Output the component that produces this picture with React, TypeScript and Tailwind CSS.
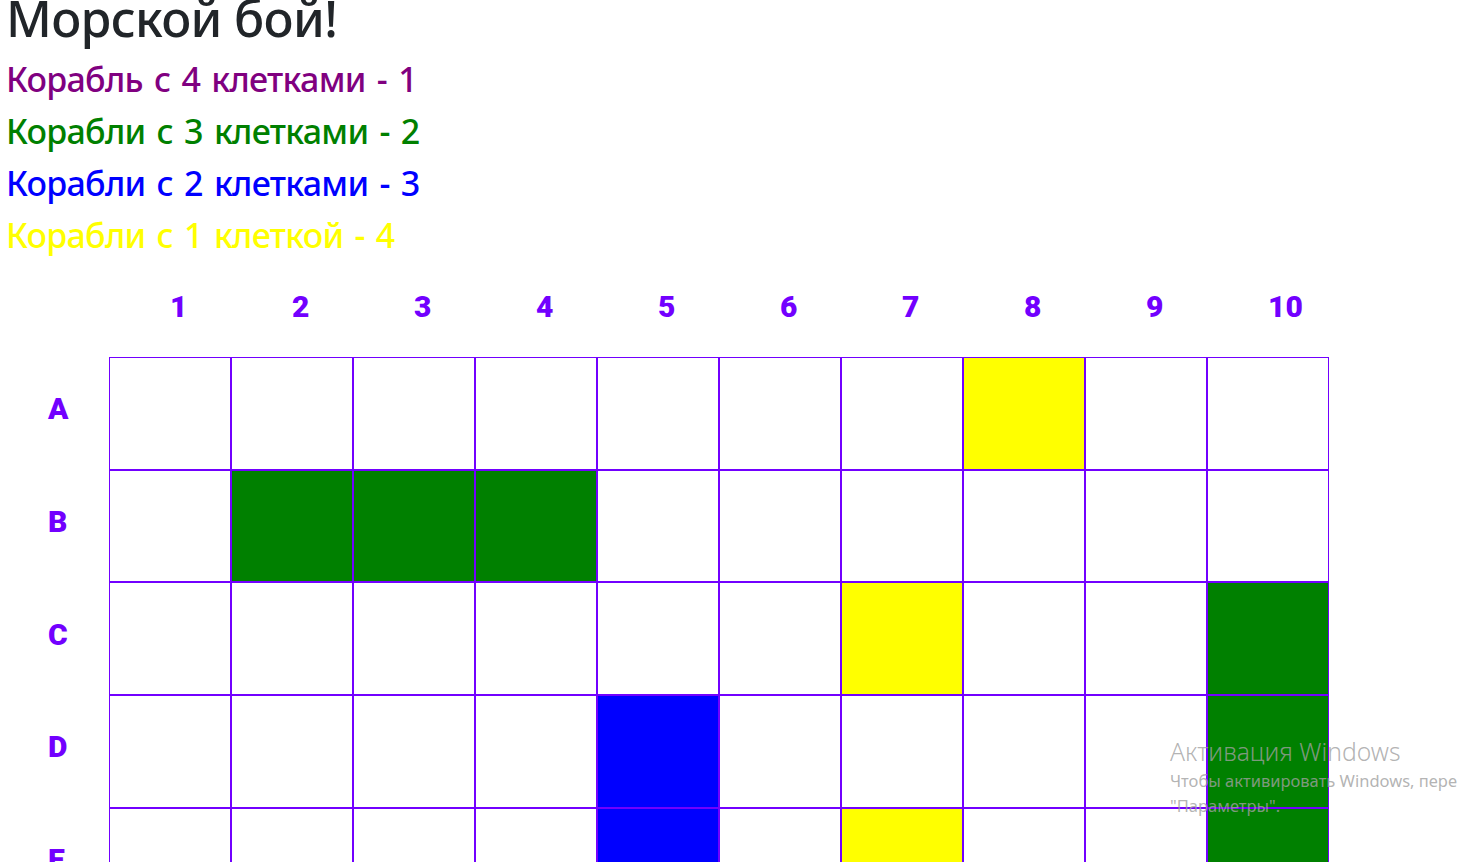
import React from 'react';

const ships = [
  { label: 'Корабль с 4 клетками - 1', color: 'text-[#800080]' },
  { label: 'Корабли с 3 клетками - 2', color: 'text-[#008000]' },
  { label: 'Корабли с 2 клетками - 3', color: 'text-[#0000ff]' },
  { label: 'Корабли с 1 клеткой - 4', color: 'text-[#ffff00]' },
];

const columns = ['1', '2', '3', '4', '5', '6', '7', '8', '9', '10'];

// расстановка кораблей: номер столбца -> цвет клетки
const rows: { name: string; cells: Record<number, string> }[] = [
  { name: 'A', cells: { 7: 'bg-[#ffff00]' } },
  { name: 'B', cells: { 1: 'bg-[#008000]', 2: 'bg-[#008000]', 3: 'bg-[#008000]' } },
  { name: 'C', cells: { 6: 'bg-[#ffff00]', 9: 'bg-[#008000]' } },
  { name: 'D', cells: { 4: 'bg-[#0000ff]', 9: 'bg-[#008000]' } },
  { name: 'E', cells: { 4: 'bg-[#0000ff]', 6: 'bg-[#ffff00]', 9: 'bg-[#008000]' } },
];

const labelFont = "[font-family:'Roboto',sans-serif] font-black text-[30px] leading-none text-[#7200ff]";

export default function App() {
  return (
    <div className="relative h-[862px] w-[1457px] overflow-hidden bg-white [font-family:'Noto_Sans',sans-serif]">
      <div className="-mt-[12px] pl-[6px]">
        <h1 className="mb-[10px] text-[50px] leading-[60px] font-medium tracking-[-0.7px] text-[#212529]">Морской бой!</h1>
        {ships.map(ship => (
          <h3 key={ship.label} className={`mb-[10px] h-[42px] text-[34px] leading-[42px] font-medium tracking-[-0.72px] [word-spacing:3px] ${ship.color}`}>
            {ship.label}
          </h3>
        ))}
      </div>

      <table className="table-fixed w-[1329px] border-separate border-spacing-0">
        <thead>
          <tr className="h-[91px]">
            <th className="w-[109px] p-0"></th>
            {columns.map(col => (
              <th key={col} className="w-[122px] p-0 pl-[61px] pb-[8px] text-left align-middle">
                <span className={labelFont}>{col}</span>
              </th>
            ))}
          </tr>
        </thead>
        <tbody>
          {rows.map(row => (
            <tr key={row.name} className="h-[112.67px]">
              <td className="p-0 pl-[48px] pb-[7px] align-middle">
                <span className={labelFont}>{row.name}</span>
              </td>
              {columns.map((col, i) => (
                <td key={col} className={`border border-[#7200ff] p-0 ${row.cells[i] || ''}`}></td>
              ))}
            </tr>
          ))}
        </tbody>
      </table>

      {/* Водяной знак Windows поверх страницы */}
      <div className="pointer-events-none absolute top-[735px] left-[1170px] whitespace-nowrap text-[rgba(160,160,160,0.8)]">
        <div className="text-[24.7px] leading-[33px] font-light">Активация Windows</div>
        <div className="text-[16.5px] leading-[25px]">Чтобы активировать Windows, перейдите в раздел</div>
        <div className="text-[16.5px] leading-[25px]">"Параметры".</div>
      </div>
    </div>
  );
}
